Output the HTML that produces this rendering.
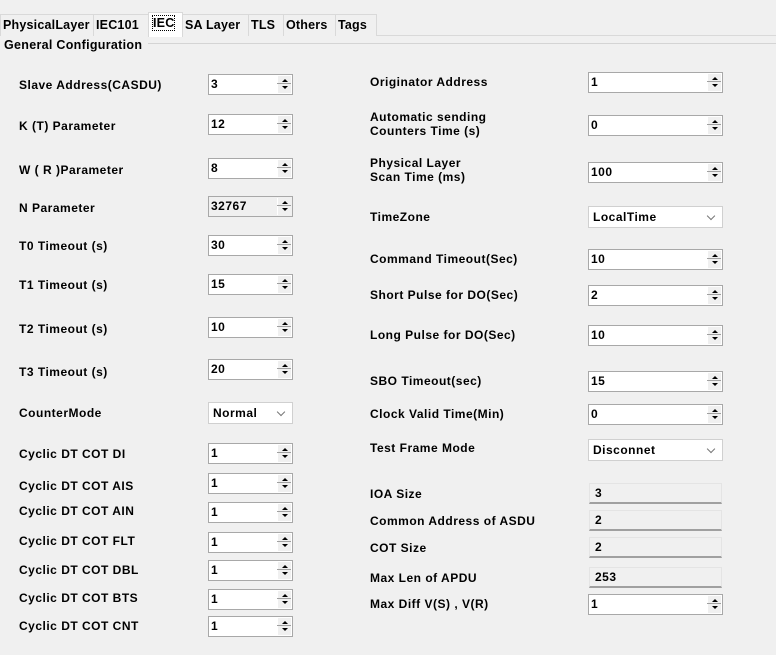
<!DOCTYPE html>
<html><head><meta charset="utf-8"><style>
*{margin:0;padding:0;box-sizing:border-box}
body{width:776px;height:655px;background:#f0f0f0;position:relative;overflow:hidden;font:bold 12px "Liberation Sans",sans-serif;color:#000;letter-spacing:0.5px}
.t{position:absolute;top:14px;height:22px;line-height:21px;padding:0 2px;border:1px solid #d9d9d9;border-bottom:none;background:#f0f0f0;font-size:12.5px;white-space:nowrap;letter-spacing:0.2px}
.sel{top:12px;height:25px;background:#fff;border-color:#d9d9d9;z-index:2;padding-left:4px}
.sel span{outline:1px dotted #000}
.l{position:absolute;white-space:nowrap;line-height:14px}
.s{position:absolute;height:21px;background:#fff;border:1px solid #a8a8a8;padding-left:2px;line-height:19px}
.s.g{background:#f0f0f0}
.s i{position:absolute;right:1px;top:1px;width:14px;height:17px;background:#f0f0f0;border-left:1px solid #fff}
.s i:before{content:"";position:absolute;left:4px;top:3px;border:3px solid transparent;border-bottom:3px solid #000;border-top:0}
.s i:after{content:"";position:absolute;left:4px;top:10px;border:3px solid transparent;border-top:3px solid #000;border-bottom:0}
.s b{position:absolute;right:1px;top:8px;width:14px;height:1px;background:#a0a0a0}
.c{position:absolute;height:22px;background:#fff;border:1px solid #d0d0d0;padding-left:4px;line-height:20px}
.c:after{content:"";position:absolute;right:8px;top:6px;width:5px;height:5px;border-right:1px solid #777;border-bottom:1px solid #777;transform:rotate(45deg)}
.r{position:absolute;height:21px;border:1px solid #e4e4e4;border-bottom:2px solid #a0a0a0;padding-left:5px;line-height:19px;background:#f0f0f0}
</style></head><body>
<div style="position:absolute;left:0;top:35px;width:776px;height:1px;background:#d9d9d9"></div>
<div class="t" style="left:0;width:94px">PhysicalLayer</div>
<div class="t" style="left:93px;width:56px">IEC101</div>
<div class="t sel" style="left:148px;width:35px"><span>IEC</span></div>
<div class="t" style="left:182px;width:67px">SA Layer</div>
<div class="t" style="left:248px;width:36px">TLS</div>
<div class="t" style="left:283px;width:53px">Others</div>
<div class="t" style="left:335px;width:42px">Tags</div>
<div style="position:absolute;left:148px;top:43px;width:628px;height:1px;background:#d4d4d4"></div>
<div class="l" style="left:4px;top:38px;font-size:12.5px;letter-spacing:0.3px">General Configuration</div>

<div class="l" style="left:19px;top:78px">Slave Address(CASDU)</div><div class="s" style="left:208px;top:74px;width:85px">3<i></i><b></b></div>
<div class="l" style="left:19px;top:119px">K (T) Parameter</div><div class="s" style="left:208px;top:114px;width:85px">12<i></i><b></b></div>
<div class="l" style="left:19px;top:163px">W ( R )Parameter</div><div class="s" style="left:208px;top:158px;width:85px">8<i></i><b></b></div>
<div class="l" style="left:19px;top:201px">N Parameter</div><div class="s g" style="left:208px;top:196px;width:85px">32767<i></i><b></b></div>
<div class="l" style="left:19px;top:239px">T0 Timeout (s)</div><div class="s" style="left:208px;top:235px;width:85px">30<i></i><b></b></div>
<div class="l" style="left:19px;top:278px">T1 Timeout (s)</div><div class="s" style="left:208px;top:274px;width:85px">15<i></i><b></b></div>
<div class="l" style="left:19px;top:322px">T2 Timeout (s)</div><div class="s" style="left:208px;top:317px;width:85px">10<i></i><b></b></div>
<div class="l" style="left:19px;top:365px">T3 Timeout (s)</div><div class="s" style="left:208px;top:359px;width:85px">20<i></i><b></b></div>
<div class="l" style="left:19px;top:406px">CounterMode</div><div class="c" style="left:208px;top:402px;width:85px">Normal</div>
<div class="l" style="left:19px;top:447px">Cyclic DT COT DI</div><div class="s" style="left:208px;top:443px;width:85px">1<i></i><b></b></div>
<div class="l" style="left:19px;top:479px">Cyclic DT COT AIS</div><div class="s" style="left:208px;top:473px;width:85px">1<i></i><b></b></div>
<div class="l" style="left:19px;top:504px">Cyclic DT COT AIN</div><div class="s" style="left:208px;top:502px;width:85px">1<i></i><b></b></div>
<div class="l" style="left:19px;top:534px">Cyclic DT COT FLT</div><div class="s" style="left:208px;top:532px;width:85px">1<i></i><b></b></div>
<div class="l" style="left:19px;top:563px">Cyclic DT COT DBL</div><div class="s" style="left:208px;top:560px;width:85px">1<i></i><b></b></div>
<div class="l" style="left:19px;top:591px">Cyclic DT COT BTS</div><div class="s" style="left:208px;top:589px;width:85px">1<i></i><b></b></div>
<div class="l" style="left:19px;top:619px">Cyclic DT COT CNT</div><div class="s" style="left:208px;top:616px;width:85px">1<i></i><b></b></div>

<div class="l" style="left:370px;top:75px">Originator Address</div><div class="s" style="left:588px;top:72px;width:135px">1<i></i><b></b></div>
<div class="l" style="left:370px;top:110px">Automatic sending<br>Counters Time (s)</div><div class="s" style="left:588px;top:115px;width:135px">0<i></i><b></b></div>
<div class="l" style="left:370px;top:156px">Physical Layer<br>Scan Time (ms)</div><div class="s" style="left:588px;top:162px;width:135px">100<i></i><b></b></div>
<div class="l" style="left:370px;top:210px">TimeZone</div><div class="c" style="left:588px;top:206px;width:135px">LocalTime</div>
<div class="l" style="left:370px;top:252px">Command Timeout(Sec)</div><div class="s" style="left:588px;top:249px;width:135px">10<i></i><b></b></div>
<div class="l" style="left:370px;top:288px">Short Pulse for DO(Sec)</div><div class="s" style="left:588px;top:285px;width:135px">2<i></i><b></b></div>
<div class="l" style="left:370px;top:328px">Long Pulse for DO(Sec)</div><div class="s" style="left:588px;top:325px;width:135px">10<i></i><b></b></div>
<div class="l" style="left:370px;top:374px">SBO Timeout(sec)</div><div class="s" style="left:588px;top:371px;width:135px">15<i></i><b></b></div>
<div class="l" style="left:370px;top:407px">Clock Valid Time(Min)</div><div class="s" style="left:588px;top:404px;width:135px">0<i></i><b></b></div>
<div class="l" style="left:370px;top:441px">Test Frame Mode</div><div class="c" style="left:588px;top:439px;width:135px">Disconnet</div>
<div class="l" style="left:370px;top:487px">IOA Size</div><div class="r" style="left:589px;top:483px;width:133px">3</div>
<div class="l" style="left:370px;top:514px">Common Address of ASDU</div><div class="r" style="left:589px;top:510px;width:133px">2</div>
<div class="l" style="left:370px;top:541px">COT Size</div><div class="r" style="left:589px;top:537px;width:133px">2</div>
<div class="l" style="left:370px;top:571px">Max Len of APDU</div><div class="r" style="left:589px;top:567px;width:133px">253</div>
<div class="l" style="left:370px;top:597px">Max Diff V(S) , V(R)</div><div class="s" style="left:588px;top:594px;width:135px">1<i></i><b></b></div>
</body></html>
